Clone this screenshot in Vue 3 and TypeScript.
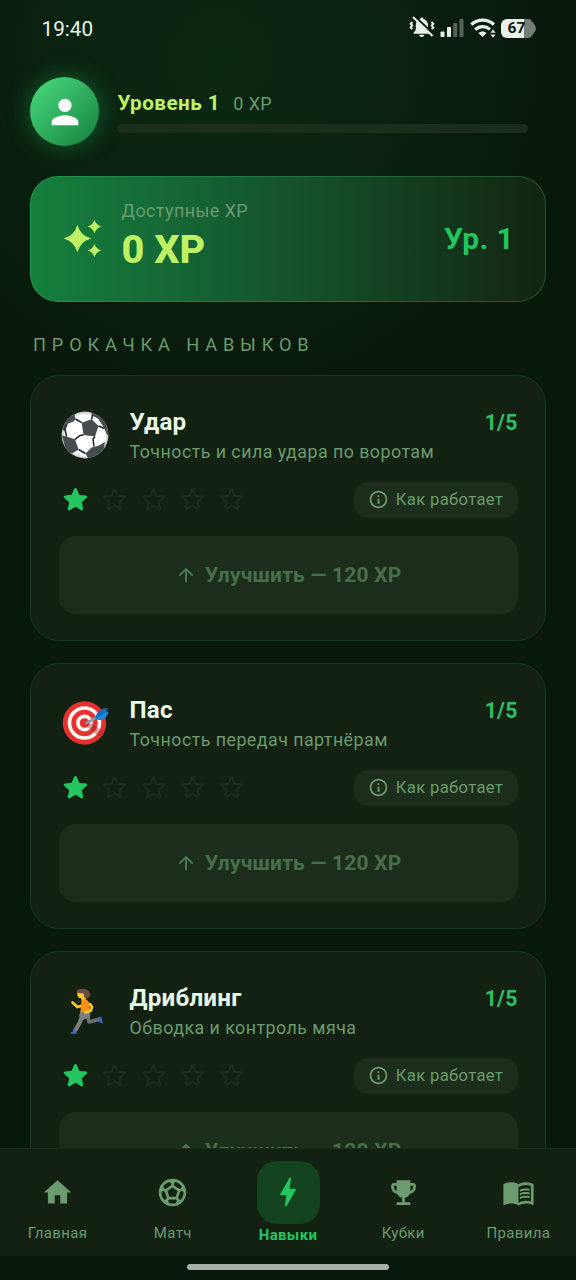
<script setup lang="ts">
interface Skill {
  id: 'ball' | 'target' | 'runner'
  name: string
  description: string
  level: number
}

interface Tab {
  label: string
  paths: string[]
  active?: boolean
}

const maxLevel = 5
const upgradeCost = 120

const skills: Skill[] = [
  { id: 'ball', name: 'Удар', description: 'Точность и сила удара по воротам', level: 1 },
  { id: 'target', name: 'Пас', description: 'Точность передач партнёрам', level: 1 },
  { id: 'runner', name: 'Дриблинг', description: 'Обводка и контроль мяча', level: 1 },
]

const starFilled =
  'M12 17.27l4.15 2.51c.76.46 1.69-.22 1.49-1.08l-1.1-4.72 3.67-3.18c.67-.58.31-1.68-.57-1.75l-4.83-.41-1.89-4.46c-.34-.81-1.5-.81-1.84 0L9.19 8.63l-4.83.41c-.88.07-1.24 1.17-.57 1.75l3.67 3.18-1.1 4.72c-.2.86.73 1.54 1.49 1.08l4.15-2.5z'
const starOutline =
  'M19.65 9.04l-4.84-.42-1.89-4.45c-.34-.81-1.5-.81-1.84 0L9.19 8.63l-4.83.41c-.88.07-1.24 1.17-.57 1.75l3.67 3.18-1.1 4.72c-.2.86.73 1.54 1.49 1.08l4.15-2.5 4.15 2.51c.76.46 1.69-.22 1.49-1.08l-1.1-4.73 3.67-3.18c.67-.58.32-1.68-.56-1.75zM12 15.4l-3.76 2.27 1-4.28-3.32-2.88 4.38-.38L12 6.1l1.71 4.04 4.38.38-3.32 2.88 1 4.28L12 15.4z'

const tabs: Tab[] = [
  { label: 'Главная', paths: ['M10 20v-6h4v6h5v-8h3L12 3 2 12h3v8z'] },
  {
    label: 'Матч',
    paths: [
      'M12 2C6.48 2 2 6.48 2 12s4.48 10 10 10 10-4.48 10-10S17.52 2 12 2zm1 3.3l1.35-.95c1.82.56 3.37 1.76 4.38 3.34l-.39 1.34-1.35.46L13 6.7V5.3zm-3.35-.95L11 5.3v1.4L7.01 9.49l-1.35-.46-.39-1.34c1.01-1.57 2.56-2.77 4.38-3.34zM7.08 17.11l-1.14.1C4.73 15.81 4 13.99 4 12c0-.12.01-.23.02-.35l1-.73 1.38.48 1.46 4.34-.78 1.37zm7.42 2.48c-.79.26-1.63.41-2.5.41s-1.71-.15-2.5-.41l-.69-1.49.64-1.1h5.11l.64 1.11-.7 1.48zM14.27 15H9.73l-1.35-4.02L12 8.44l3.63 2.54L14.27 15zm3.79 2.21l-1.14-.1-.79-1.37 1.46-4.34 1.39-.47 1 .73c.01.11.02.22.02.34 0 1.99-.73 3.81-1.94 5.21z',
    ],
  },
  {
    label: 'Навыки',
    active: true,
    paths: [
      'M11 21h-1l1-7H7.5c-.58 0-.57-.32-.38-.66.19-.34.05-.08.07-.12C8.48 10.94 10.42 7.54 13 3h1l-1 7h3.5c.49 0 .56.33.47.51l-.07.15C12.96 17.55 11 21 11 21z',
    ],
  },
  {
    label: 'Кубки',
    paths: [
      'M19 5h-2V3H7v2H5c-1.1 0-2 .9-2 2v1c0 2.55 1.92 4.63 4.39 4.94.63 1.5 1.98 2.63 3.61 2.96V19H7v2h10v-2h-4v-3.1c1.63-.33 2.98-1.46 3.61-2.96C19.08 12.63 21 10.55 21 8V7c0-1.1-.9-2-2-2zM5 8V7h2v3.82C5.84 10.4 5 9.3 5 8zm14 0c0 1.3-.84 2.4-2 2.82V7h2v1z',
    ],
  },
  {
    label: 'Правила',
    paths: [
      'M21 5c-1.11-.35-2.33-.5-3.5-.5-1.95 0-4.05.4-5.5 1.5-1.45-1.1-3.55-1.5-5.5-1.5S2.45 4.9 1 6v14.65c0 .25.25.5.5.5.1 0 .15-.05.25-.05C3.1 20.45 5.05 20 6.5 20c1.95 0 4.05.4 5.5 1.5 1.35-.85 3.8-1.5 5.5-1.5 1.65 0 3.35.3 4.75 1.05.1.05.15.05.25.05.25 0 .5-.25.5-.5V6c-.6-.45-1.25-.75-2-1zm0 13.5c-1.1-.35-2.3-.5-3.5-.5-1.7 0-4.15.65-5.5 1.5V8c1.35-.85 3.8-1.5 5.5-1.5 1.2 0 2.4.15 3.5.5v11.5z',
      'M17.5 10.5c.88 0 1.73.09 2.5.26V9.24c-.79-.15-1.64-.24-2.5-.24-1.7 0-3.24.29-4.5.83v1.66c1.13-.64 2.7-.99 4.5-.99z',
      'M13 12.49v1.66c1.13-.64 2.7-.99 4.5-.99.88 0 1.73.09 2.5.26V11.9c-.79-.15-1.64-.24-2.5-.24-1.7 0-3.24.3-4.5.83z',
      'M17.5 14.33c-1.7 0-3.24.29-4.5.83v1.66c1.13-.64 2.7-.99 4.5-.99.88 0 1.73.09 2.5.26v-1.52c-.79-.16-1.64-.24-2.5-.24z',
    ],
  },
]
</script>

<template>
  <div class="screen">
    <div class="status">
      <span class="clock">19:40</span>
      <div class="status-icons">
        <svg class="bell" viewBox="0 0 26 24">
          <path d="M12.8 1.6c1 0 1.6.6 1.6 1.5 3 .8 4.6 3.1 4.6 6v5l2.2 2.6v1H4.6v-1l2.2-2.6v-5c0-2.9 1.6-5.2 4.5-6 0-.9.5-1.5 1.5-1.5zM10.2 18.8h5.2c-.3 1.4-1.3 2.2-2.6 2.2s-2.3-.8-2.6-2.2z" fill="#e9efe9" />
          <path d="M3.5 6l-1.8 1.8 1.5 1.8-1.5 1.8 1.5 1.8M22.500 6l1.8 1.8-1.5 1.8 1.5 1.8-1.5 1.8" fill="none" stroke="#e9efe9" stroke-width="2" />
          <path d="M5.5 0L26 19.5" stroke="#0a1b0d" stroke-width="2" />
          <path d="M4 1L23.5 20" stroke="#e9efe9" stroke-width="2" />
        </svg>
        <svg class="signal" viewBox="0 0 24 20">
          <rect x="0.5" y="13.5" width="4" height="5.5" rx="0.8" fill="#e9efe9" />
          <rect x="7" y="9" width="4" height="10" rx="0.8" fill="#e9efe9" />
          <rect x="13.2" y="5" width="4" height="14" rx="0.8" fill="#566257" />
          <rect x="19.5" y="1" width="4" height="18" rx="0.8" fill="#566257" />
        </svg>
        <svg class="wifi" viewBox="0 0 26 20">
          <g fill="none" stroke="#e9efe9">
            <path d="M1.3 6.6C8 .6 17.5.6 24 6.6" stroke-width="3.4" />
            <path d="M5.2 11.6c4.4-3.9 10.4-3.9 14.8-.2" stroke-width="3.2" />
          </g>
          <path d="M8.3 15c2.4-2.1 5.9-2.1 8.3 0L12.5 19z" fill="#e9efe9" />
          <path d="M23 11l3 4h-6zM23 20l3-3.7h-6z" fill="#e9efe9" stroke="#0a1b0d" stroke-width="0.5" />
        </svg>
        <div class="battery-wrap">
          <div class="battery"><span>67</span></div>
          <svg class="battery-tip" viewBox="0 0 4 19"><path d="M0 2L3.5 7.5Q4 9.5 3.5 11.5L0 17z" /></svg>
        </div>
      </div>
    </div>

    <header class="profile">
      <div class="avatar">
        <svg viewBox="0 0 24 24"><path d="M12 12c2.21 0 4-1.79 4-4s-1.79-4-4-4-4 1.79-4 4 1.79 4 4 4zm0 2c-2.67 0-8 1.34-8 4v2h16v-2c0-2.66-5.33-4-8-4z" /></svg>
      </div>
      <div class="progress">
        <div class="progress-label"><b>Уровень 1</b><span>0 XP</span></div>
        <div class="bar"></div>
      </div>
    </header>

    <section class="xp-card">
      <svg class="sparkle" viewBox="0 0 24 24">
        <path d="M9 4Q10.7 10.3 17 12 10.7 13.7 9 20 7.3 13.7 1 12 7.3 10.3 9 4zM19 1Q19.9 4.1 23 5 19.9 5.9 19 9 18.1 5.9 15 5 18.1 4.1 19 1zM19 15Q19.9 18.1 23 19 19.9 19.9 19 23 18.1 19.9 15 19 18.1 18.1 19 15z" />
      </svg>
      <div class="xp-text">
        <span class="xp-caption">Доступные XP</span>
        <strong class="xp-value">0 XP</strong>
      </div>
      <strong class="xp-level">Ур. 1</strong>
    </section>

    <h2 class="section-title">ПРОКАЧКА НАВЫКОВ</h2>

    <main class="list">
      <article v-for="skill in skills" :key="skill.id" class="card">
        <div class="card-head">
          <svg v-if="skill.id === 'ball'" class="emoji" viewBox="0 0 48 48">
            <defs>
              <clipPath id="ball-clip"><circle cx="24" cy="24" r="23.4" /></clipPath>
              <radialGradient id="ball-shade" cx="0.5" cy="0.5" r="0.5">
                <stop offset="0.82" stop-color="#fff" /><stop offset="1" stop-color="#b9bcbb" />
              </radialGradient>
            </defs>
            <g clip-path="url(#ball-clip)">
              <rect width="48" height="48" fill="url(#ball-shade)" />
              <g fill="#474c50">
                <path d="M20.7 11.7L30.7 8.3 37.5 15 34 25.500 22.500 24z" />
                <path d="M0 18L3 8 13 1 14.500 8 12.500 10.500 6 13 3.500 20z" />
                <path d="M1 24.500L5.500 25.500 14 28.300 17.500 38.500 11 42.500 5 40z" />
                <path d="M24.500 42.500L30.500 36.500 37.500 34.700 44 31 42 42 34 48 27 47z" />
                <path d="M30.500 0L40 5 45.500 15 47.500 23 46 24 43.500 17.500 37 7.500 31 4.500z" />
              </g>
              <g fill="none" stroke="#1d2224" stroke-width="1.500">
                <path d="M20.700 11.700L14.500 8M30.700 8.300L31.500 3.500M37.500 15L43.500 17.500M22.500 24L19 24.500 14 28.300M34 25.500L32 28 33 35.500M6 13L4 18 5.500 25.500" />
                <path d="M17.500 38.500L24.500 42.500" />
              </g>
            </g>
          </svg>

          <svg v-else-if="skill.id === 'target'" class="emoji" viewBox="0 0 48 48">
            <circle cx="23.500" cy="24" r="21.700" fill="#e5322f" />
            <circle cx="23.500" cy="24" r="15" fill="none" stroke="#fff5f2" stroke-width="3.600" />
            <circle cx="23.500" cy="24" r="6.600" fill="none" stroke="#fff5f2" stroke-width="3.600" />
            <path d="M25 27l13 10.500 4-5-13-9z" fill="#9f1f24" opacity="0.400" />
            <path d="M24.500 24.500l12-6.500" stroke="#8d9aa6" stroke-width="2.600" />
            <path d="M34 20l2-6 6-4.500 5-.500-1.500 3.500 2 1.500-4 5.500-5 1.500z" fill="#1769ba" />
            <path d="M35 19.500l11-7 1.500 1.500-4 5.500-5 1.500z" fill="#1e88d8" />
          </svg>

          <svg v-else class="emoji" viewBox="0 0 48 48">
            <g fill="none" stroke-linejoin="round">
              <path d="M26 25.500L28 35 37 32.500" stroke="#6d6e70" stroke-width="3.600" />
              <path d="M22.500 25.500L18.500 36 14 44" stroke="#7c7d7f" stroke-width="4.200" />
            </g>
            <path d="M19.500 24h10l-.5 6-7 3-4-4z" fill="#7c7d7f" />
            <path d="M36 31l4-1.500 2 6.500-1 .8-2-2-2.500.2zM12 42.500l4 1.700-.5 2.500H9.500l.3-1.400 2-.6z" fill="#416ab5" />
            <path d="M20 19l-3.500 1L11.500 15.500" fill="none" stroke="#ffca28" stroke-width="2.800" stroke-linecap="round" stroke-linejoin="round" />
            <path d="M16.500 5c1-2 7-3 9 1l-.5 5.500-1.500 3-3-1-.5-2.500c-3 .5-4-2-3.500-6z" fill="#ffca28" />
            <path d="M15.500 4c1.500-3.500 13-3.500 13.500 3 .2 3-1.500 4.500-4 4.500l-2-1.500-.5-3.500-5-.5z" fill="#6d4c41" />
            <path d="M20.500 13c3.500-2 7 0 8 4l.5 7.500c-3 1.500-6 1.500-9.500 0z" fill="#ff8f17" />
            <path d="M29 17L31 20 30 23.500 24.500 25.500" fill="none" stroke="#ffca28" stroke-width="2.600" stroke-linecap="round" stroke-linejoin="round" />
          </svg>

          <div class="card-titles">
            <h3>{{ skill.name }}</h3>
            <p>{{ skill.description }}</p>
          </div>
          <span class="level">{{ skill.level }}/{{ maxLevel }}</span>
        </div>

        <div class="card-mid">
          <div class="stars">
            <svg v-for="n in maxLevel" :key="n" viewBox="0 0 24 24" :class="{ on: n <= skill.level }">
              <path :d="n <= skill.level ? starFilled : starOutline" />
            </svg>
          </div>
          <button class="how">
            <svg viewBox="0 0 24 24"><path d="M11 7h2v2h-2zm0 4h2v6h-2zm1-9C6.48 2 2 6.48 2 12s4.48 10 10 10 10-4.48 10-10S17.52 2 12 2zm0 18c-4.41 0-8-3.59-8-8s3.59-8 8-8 8 3.59 8 8-3.59 8-8 8z" /></svg>
            <span>Как работает</span>
          </button>
        </div>

        <button class="upgrade">
          <svg viewBox="0 0 24 24"><path d="M4 12l1.41 1.41L11 7.83V20h2V7.83l5.58 5.59L20 12l-8-8-8 8z" /></svg>
          <span>Улучшить — {{ upgradeCost }} XP</span>
        </button>
      </article>
    </main>

    <nav class="tabs">
      <a v-for="tab in tabs" :key="tab.label" class="tab" :class="{ active: tab.active }">
        <span class="tab-icon">
          <svg viewBox="0 0 24 24"><path v-for="p in tab.paths" :key="p" :d="p" /></svg>
        </span>
        <span class="tab-label">{{ tab.label }}</span>
      </a>
    </nav>
    <div class="home-indicator"><i></i></div>
  </div>
</template>

<style>
body {
  margin: 0;
  background: #08190b;
}
</style>

<style scoped>
.screen {
  display: flex;
  flex-direction: column;
  width: 576px;
  height: 1280px;
  overflow: hidden;
  box-sizing: border-box;
  font-family: Roboto, "Noto Sans", sans-serif;
  color: #6b9b6e;
  background: radial-gradient(ellipse 320px 330px at 220px 60px, #0b2812 0%, #0a2210 50%, #08190b 100%);
}
svg { display: block; flex: none; }
button { border: 0; margin: 0; padding: 0; font: inherit; color: inherit; }

.status {
  display: flex;
  justify-content: space-between;
  align-items: center;
  flex: none;
  height: 56px;
  padding: 0 40px 0 41.5px;
}
.clock { padding-top: 1px; font-size: 20.7px; color: #e9f5ea; }
.status-icons { display: flex; align-items: center; }
.bell { width: 26px; height: 24px; }
.signal { width: 24px; height: 20px; margin-left: 5px; }
.wifi { width: 26px; height: 20px; margin-left: 6px; }
.battery-wrap { display: flex; align-items: center; margin-left: 5px; }
.battery {
  width: 31px;
  height: 19px;
  border-radius: 6px 4px 4px 6px;
  background: linear-gradient(90deg, #e9efe9 0 23px, #747e75 23px);
  color: #0c1a0e;
  font-size: 15.5px;
  line-height: 19px;
  font-weight: 700;
  text-align: center;
}
.battery-tip { width: 4px; height: 19px; fill: #747e75; }

.profile {
  display: flex;
  align-items: center;
  flex: none;
  height: 69px;
  padding: 21px 48px 0 30px;
}
.avatar {
  display: grid;
  place-items: center;
  width: 69px;
  height: 69px;
  border-radius: 50%;
  background: linear-gradient(135deg, #4ade80, #15803d);
  box-shadow: 0 0 23px rgba(34, 197, 94, 0.4);
}
.avatar svg { width: 40px; height: 40px; fill: #fff; }
.progress { flex: 1; margin-left: 18px; padding-top: 1px; }
.progress-label { display: flex; align-items: baseline; gap: 13px; height: 24px; line-height: 24px; padding-left: 0.5px; }
.progress-label b { font-size: 20.7px; letter-spacing: 0.45px; color: #bef264; }
.progress-label span { font-size: 18px; letter-spacing: 0.45px; }
.bar { height: 9px; margin-top: 9px; border-radius: 5px; background: #1c2e1b; }

.xp-card {
  display: flex;
  align-items: center;
  flex: none;
  box-sizing: border-box;
  height: 126px;
  margin: 29.5px 30px 0;
  padding: 0 31px 0 31px;
  border: 1.5px solid rgba(74, 222, 128, 0.25);
  border-radius: 28px;
  background: linear-gradient(90deg, #15803d, #14532d 50%, #132412 100%) border-box;
}
.sparkle { width: 41px; height: 41px; fill: #bef264; }
.xp-text { display: flex; flex-direction: column; margin-left: 18.5px; }
.xp-caption { font-size: 17.9px; line-height: 22px; letter-spacing: 0.45px; }
.xp-value { font-size: 39.7px; line-height: 55px; font-weight: 800; color: #bef264; }
.xp-level { margin-left: auto; font-size: 30px; letter-spacing: 0.4px; color: #22c55e; }

.section-title {
  flex: none;
  margin: 30px 33px 0;
  height: 43.5px;
  font-size: 18.2px;
  line-height: 25px;
  font-weight: 400;
  letter-spacing: 5.85px;
  white-space: nowrap;
}

.list {
  display: flex;
  flex-direction: column;
  gap: 22px;
  flex: 1;
  min-height: 0;
  padding: 0 30px;
  overflow: hidden;
}
.card {
  flex: none;
  box-sizing: border-box;
  height: 266px;
  padding: 29.5px 27.5px 27px 28px;
  border: 1.5px solid #123a1d;
  border-radius: 29px;
  background: #122112;
}
.card-head { display: flex; align-items: flex-start; height: 62px; }
.emoji { width: 48px; height: 48px; margin: 5px 0 0 2px; }
.card-titles { margin-left: 20.5px; flex: 1; }
h3 { margin: 0; font-size: 24.2px; line-height: 32px; font-weight: 700; letter-spacing: 0.2px; color: #e8f8e9; }
p { margin: 0; padding-top: 1px; font-size: 17.85px; line-height: 26px; letter-spacing: 0.45px; white-space: nowrap; }
.level { font-size: 21.2px; line-height: 33px; font-weight: 700; letter-spacing: 0.2px; color: #2fc063; }

.card-mid { display: flex; justify-content: space-between; align-items: center; margin-top: 14px; height: 36px; }
.stars { display: flex; gap: 6px; margin-left: -0.5px; }
.stars svg { width: 33px; height: 33px; fill: #1c2e1b; }
.stars svg.on { fill: #22c55e; }
.how {
  display: flex;
  align-items: center;
  justify-content: center;
  gap: 7px;
  width: 164px;
  height: 36px;
  border-radius: 13px;
  background: #1c2e1b;
  font-size: 16.7px;
  letter-spacing: 0.3px;
}
.how svg { width: 21px; height: 21px; fill: #6b9b6e; }
.upgrade {
  display: flex;
  align-items: center;
  justify-content: center;
  gap: 8px;
  width: 100%;
  height: 78px;
  margin-top: 18px;
  border-radius: 17px;
  background: #1c2e1b;
  color: #47704a;
  font-size: 20.9px;
  font-weight: 700;
  letter-spacing: 0.25px;
}
.upgrade svg { width: 22px; height: 22px; fill: #4f7d52; }

.tabs {
  display: flex;
  flex: none;
  box-sizing: border-box;
  height: 108px;
  border-top: 1.5px solid #1c2e1b;
  background: #122112;
}
.tab { flex: 1; display: flex; flex-direction: column; align-items: center; }
.tab-icon { display: grid; place-items: center; width: 63px; height: 63px; margin-top: 11.5px; border-radius: 20px; }
.tab-icon svg { width: 33px; height: 33px; fill: #6b9b6e; }
.tab-label { font-size: 15px; line-height: 18px; letter-spacing: 0.35px; }
.active .tab-icon { background: #14431f; }
.active .tab-icon svg { width: 38px; height: 38px; fill: #22c55e; }
.active .tab-label { padding-top: 2px; font-weight: 700; color: #22c55e; }
.home-indicator { display: flex; justify-content: center; flex: none; height: 24px; background: #07180b; }
.home-indicator i { width: 202px; height: 6px; margin-top: 8px; border-radius: 3px; background: #a7aea8; }
</style>
